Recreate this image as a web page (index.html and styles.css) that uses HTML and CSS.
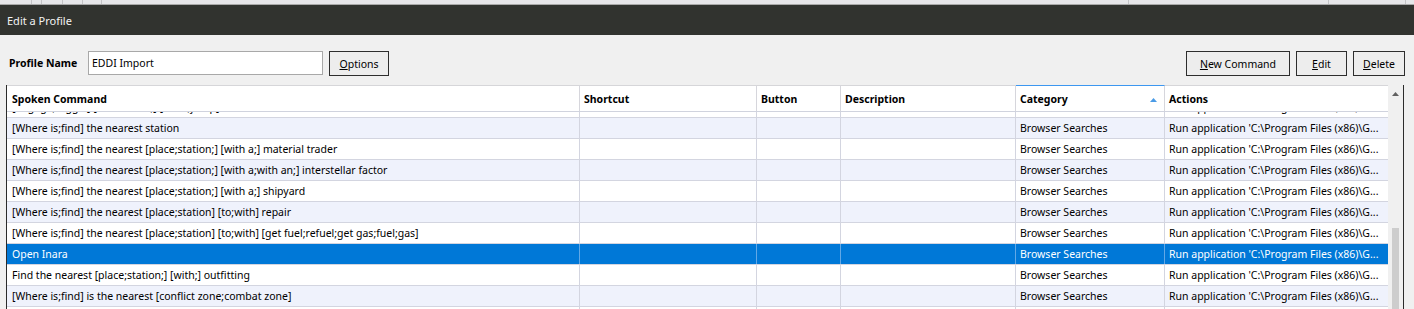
FILE: index.html
```html
<!DOCTYPE html>
<html>
<head>
<meta charset="utf-8">
<title>Edit a Profile</title>
<link rel="stylesheet" href="styles.css">
</head>
<body>
<div class="topstrip">
  <span class="seg s1"></span><span class="seg s2"></span><span class="seg s3"></span><span class="seg s4"></span><span class="seg s5"></span><span class="seg s6"></span><span class="seg s7"></span><span class="seg s8"></span>
</div>
<div class="titlebar">Edit a Profile</div>
<div class="toolbar">
  <span class="lbl">Profile Name</span>
  <div class="input">EDDI Import</div>
  <button class="btn b-options"><u>O</u>ptions</button>
  <div class="spacer"></div>
  <button class="btn b-new"><u>N</u>ew Command</button>
  <button class="btn b-edit"><u>E</u>dit</button>
  <button class="btn b-delete"><u>D</u>elete</button>
</div>
<div class="grid">
  <div class="main">
    <div class="head">
      <div class="cell c1">Spoken Command</div>
      <div class="cell c2">Shortcut</div>
      <div class="cell c3">Button</div>
      <div class="cell c4">Description</div>
      <div class="cell c5 sorted">Category<svg class="sortarrow" width="7" height="4" viewBox="0 0 7 4"><polygon points="0,4 7,4 3.5,0" fill="#4a9be6"/></svg></div>
      <div class="cell c6">Actions</div>
    </div>
    <div class="body">
      <div class="row partial">
        <div class="cell c1">[Engage;toggle] [frame shift;] [drive;jump]</div><div class="cell c2"></div><div class="cell c3"></div><div class="cell c4"></div><div class="cell c5">Browser Searches</div><div class="cell c6">Run application 'C:\Program Files (x86)\G...</div>
      </div>
      <div class="row alt">
        <div class="cell c1">[Where is;find] the nearest station</div><div class="cell c2"></div><div class="cell c3"></div><div class="cell c4"></div><div class="cell c5">Browser Searches</div><div class="cell c6">Run application 'C:\Program Files (x86)\G...</div>
      </div>
      <div class="row">
        <div class="cell c1">[Where is;find] the nearest [place;station;] [with a;] material trader</div><div class="cell c2"></div><div class="cell c3"></div><div class="cell c4"></div><div class="cell c5">Browser Searches</div><div class="cell c6">Run application 'C:\Program Files (x86)\G...</div>
      </div>
      <div class="row alt">
        <div class="cell c1">[Where is;find] the nearest [place;station;] [with a;with an;] interstellar factor</div><div class="cell c2"></div><div class="cell c3"></div><div class="cell c4"></div><div class="cell c5">Browser Searches</div><div class="cell c6">Run application 'C:\Program Files (x86)\G...</div>
      </div>
      <div class="row">
        <div class="cell c1">[Where is;find] the nearest [place;station;] [with a;] shipyard</div><div class="cell c2"></div><div class="cell c3"></div><div class="cell c4"></div><div class="cell c5">Browser Searches</div><div class="cell c6">Run application 'C:\Program Files (x86)\G...</div>
      </div>
      <div class="row alt">
        <div class="cell c1">[Where is;find] the nearest [place;station] [to;with] repair</div><div class="cell c2"></div><div class="cell c3"></div><div class="cell c4"></div><div class="cell c5">Browser Searches</div><div class="cell c6">Run application 'C:\Program Files (x86)\G...</div>
      </div>
      <div class="row">
        <div class="cell c1">[Where is;find] the nearest [place;station] [to;with] [get fuel;refuel;get gas;fuel;gas]</div><div class="cell c2"></div><div class="cell c3"></div><div class="cell c4"></div><div class="cell c5">Browser Searches</div><div class="cell c6">Run application 'C:\Program Files (x86)\G...</div>
      </div>
      <div class="row sel">
        <div class="cell c1">Open Inara</div><div class="cell c2"></div><div class="cell c3"></div><div class="cell c4"></div><div class="cell c5">Browser Searches</div><div class="cell c6">Run application 'C:\Program Files (x86)\G...</div>
      </div>
      <div class="row">
        <div class="cell c1">Find the nearest [place;station;] [with;] outfitting</div><div class="cell c2"></div><div class="cell c3"></div><div class="cell c4"></div><div class="cell c5">Browser Searches</div><div class="cell c6">Run application 'C:\Program Files (x86)\G...</div>
      </div>
      <div class="row alt">
        <div class="cell c1">[Where is;find] is the nearest [conflict zone;combat zone]</div><div class="cell c2"></div><div class="cell c3"></div><div class="cell c4"></div><div class="cell c5">Browser Searches</div><div class="cell c6">Run application 'C:\Program Files (x86)\G...</div>
      </div>
      <div class="row">
        <div class="cell c1">[Where is;find] the nearest [place;station;] [with a;] black market</div><div class="cell c2"></div><div class="cell c3"></div><div class="cell c4"></div><div class="cell c5">Browser Searches</div><div class="cell c6">Run application 'C:\Program Files (x86)\G...</div>
      </div>
    </div>
  </div>
  <div class="vscroll">
    <svg class="uparrow" width="7" height="4" viewBox="0 0 7 4"><polygon points="0,4 7,4 3.5,0" fill="#606060"/></svg>
    <div class="thumb"></div>
  </div>
</div>
</body>
</html>
```

FILE: styles.css
```css
* { box-sizing: border-box; }
html, body {
  margin: 0;
  height: 309px;
  overflow: hidden;
  background: #f0f0f0;
  font-family: "Noto Sans", "Open Sans", sans-serif;
  font-size: 10.5px;
  color: #000;
}

.topstrip {
  display: flex;
  height: 5px;
  background: #e6e6e9;
  border-bottom: 1px solid #a9a9a9;
}
.seg { display: block; height: 100%; border-right: 1px solid #c3c3c6; }
.s1 { width: 32px; }
.s2 { width: 10px; }
.s3 { width: 21px; }
.s4 { width: 20px; }
.s5 { width: 19px; }
.s6 { width: 1027px; }
.s7 { width: 200px; }
.s8 { width: 77px; }

.titlebar {
  height: 30px;
  background: #31332f;
  color: #f2f2f2;
  padding-left: 7px;
  display: flex;
  align-items: center;
  font-size: 11px;
}

.toolbar {
  display: flex;
  align-items: flex-start;
  margin: 16px 9px 0 9px;
  height: 25px;
}
.lbl {
  width: 79px;
  height: 24px;
  line-height: 24px;
  font-weight: bold;
}
.input {
  width: 235px;
  height: 24px;
  border: 1px solid #a8a8a8;
  background: #fff;
  padding-left: 3px;
  line-height: 22px;
}
.btn {
  height: 25px;
  border: 1px solid #2d2d2d;
  background: #ededed;
  font: inherit;
  color: #000;
  padding: 0;
  margin: 0 0 0 6px;
  text-align: center;
}
.b-options { width: 60px; }
.b-new { width: 104px; margin-left: 0; }
.b-edit { width: 51px; }
.b-delete { width: 52px; }
.spacer { flex: 1; }

.grid {
  display: flex;
  margin: 9px 10px 0 6px;
  height: 240px;
  border-left: 1px solid #2b2b2b;
  border-right: 1px solid #2b2b2b;
}
.main {
  width: 1381px;
  display: flex;
  flex-direction: column;
  background: #fff;
}
.head {
  display: flex;
  height: 27px;
  border-bottom: 1px solid #d0d3de;
  font-weight: bold;
  flex: none;
}
.head .cell {
  border-top: 1px solid #d6d6d9;
  border-right-color: #d6d6dc;
}
.head .cell.sorted { border-top-color: #3d97f0; }
.sortarrow { margin-left: auto; margin-right: 7px; margin-top: 3px; flex: none; }

.body { flex: 1; overflow: hidden; }
.row {
  display: flex;
  height: 21px;
  border-bottom: 1px solid #d3d5e0;
}
.row.partial { margin-top: -15px; }
.row.alt { background: #eff2fc; }
.row.sel { background: #0078d7; color: #fff; }
.row.sel .cell { border-right-color: #62a8e6; }

.cell {
  display: flex;
  align-items: center;
  padding-left: 4px;
  border-right: 1px solid #d3d5e0;
  white-space: nowrap;
  overflow: hidden;
  flex: none;
}
.c1 { width: 573px; padding-left: 5px; }
.c2 { width: 177px; }
.c3 { width: 84px; }
.c4 { width: 175px; }
.c5 { width: 149px; }
.c6 { width: 223px; border-right: none; }

.vscroll {
  width: 15px;
  background: #f0f0f0;
  display: flex;
  flex-direction: column;
  align-items: center;
}
.uparrow { margin-top: 7px; flex: none; }
.thumb {
  width: 7px;
  height: 120px;
  margin-top: 132px;
  background: #cdcdcd;
  flex: none;
}
```
